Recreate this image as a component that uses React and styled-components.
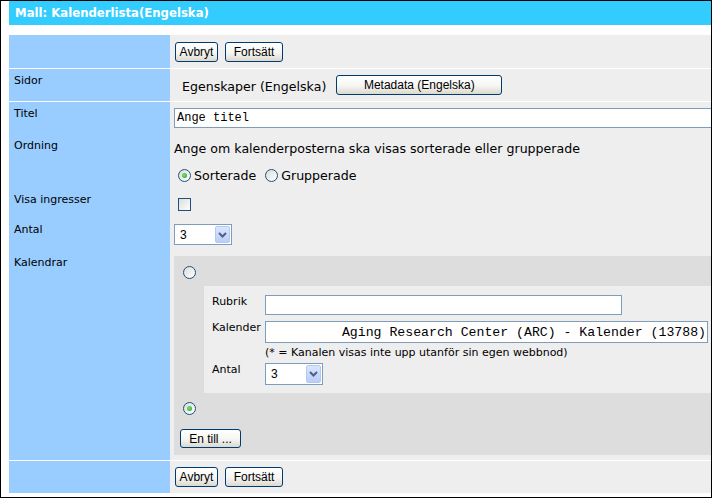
import React from "react";
import styled, { createGlobalStyle } from "styled-components";

const GlobalStyle = createGlobalStyle`
  html, body {
    margin: 0;
    padding: 0;
    background: #fff;
  }
  body {
    font-family: "DejaVu Sans", Verdana, sans-serif;
    color: #000;
  }
`;

const Frame = styled.div`
  box-sizing: border-box;
  width: 712px;
  height: 498px;
  border: 1px solid #000;
  padding: 0 0 4px 8px;
  background: #fff;
  overflow: hidden;
`;

const Header = styled.div`
  height: 24px;
  line-height: 24px;
  background: #33ccff;
  color: #fff;
  font-weight: bold;
  font-size: 11.7px;
  padding-left: 6px;
`;

const Form = styled.div`
  margin-top: 10px;
  display: flex;
  flex-direction: column;
  gap: 1px;
`;

const Section = styled.div`
  display: flex;
  flex-direction: column;
`;

const Row = styled.div`
  display: grid;
  grid-template-columns: 161px 1fr;
  height: ${(p) => p.$h}px;
`;

const Label = styled.div`
  background: #99ccff;
  font-size: 11px;
  line-height: 13px;
  padding: 5px 5px 0;
`;

const Cell = styled.div`
  box-sizing: border-box;
  background: #eeeeee;
  overflow: hidden;
  padding: ${(p) => p.$pad || "0 0 0 4px"};
`;

const Buttons = styled.div`
  display: flex;
  gap: 7px;
`;

const Button = styled.button`
  box-sizing: border-box;
  display: block;
  font: 12px "Liberation Sans", Arial, sans-serif;
  color: #000;
  height: ${(p) => p.$h || 20}px;
  width: ${(p) => p.$w}px;
  padding: 0;
  border: 1px solid #003c74;
  border-radius: 3px;
  background: linear-gradient(#ffffff, #f5f5f2 55%, #dcd8ce);
  cursor: pointer;
`;

const Inline = styled.div`
  display: flex;
  align-items: center;
  gap: 10px;
`;

const Text = styled.span`
  font-size: 12.6px;
  line-height: 16px;
  padding-top: ${(p) => p.$pt || 0}px;
`;

const TextInput = styled.input`
  box-sizing: border-box;
  display: block;
  width: ${(p) => p.$w}px;
  height: ${(p) => p.$h || 20}px;
  margin: 0;
  border: 1px solid #7f9db9;
  background: #fff;
  font-family: "Liberation Mono", "Courier New", monospace;
  font-size: ${(p) => p.$fs || 12}px;
  color: #000;
  padding: 0 ${(p) => (p.$right ? 1 : 0)}px 0 ${(p) => (p.$right ? 0 : 2)}px;
  text-align: ${(p) => (p.$right ? "right" : "left")};
  outline: none;
`;

const Paragraph = styled.div`
  font-size: 12.6px;
  line-height: 16px;
  padding-top: 1px;
`;

const RadioLine = styled.div`
  display: flex;
  align-items: center;
  height: 16px;
  margin-top: 10px;
  padding-left: 4px;
`;

const RadioLabel = styled.span`
  font-size: 12.6px;
  margin: 0 9px 0 3px;
`;

const Radio = styled.span`
  box-sizing: border-box;
  display: block;
  flex: none;
  position: relative;
  width: 13px;
  height: 13px;
  border-radius: 50%;
  border: 1px solid #1c5180;
  background: linear-gradient(135deg, #dcdcd7, #ffffff);
  &::after {
    content: "";
    display: ${(p) => (p.$checked ? "block" : "none")};
    position: absolute;
    left: 3px;
    top: 3px;
    width: 5px;
    height: 5px;
    border-radius: 50%;
    background: radial-gradient(circle at 40% 40%, #7be07b, #21a121);
  }
`;

const Checkbox = styled.span`
  box-sizing: border-box;
  display: block;
  width: 13px;
  height: 13px;
  border: 1px solid #1c5180;
  background: linear-gradient(135deg, #dcdcd7, #ffffff);
`;

const SelectBox = styled.div`
  box-sizing: border-box;
  display: flex;
  align-items: center;
  width: 58px;
  height: ${(p) => p.$h}px;
  border: 1px solid #7f9db9;
  background: #fff;
  font: 12px "Liberation Sans", Arial, sans-serif;
  padding: 1px 1px 1px 5px;
`;

const SelectArrow = styled.span`
  box-sizing: border-box;
  margin-left: auto;
  width: 15px;
  height: 100%;
  border: 1px solid #b4c8f4;
  border-radius: 2px;
  background: linear-gradient(#dbe6fe, #b9cdf8);
  display: flex;
  align-items: center;
  justify-content: center;
`;

const Select = ({ h, value }) => (
  <SelectBox $h={h}>
    <span>{value}</span>
    <SelectArrow>
      <svg width="9" height="6" viewBox="0 0 9 6">
        <polyline points="1,1 4.5,4.5 8,1" fill="none" stroke="#4d6185" strokeWidth="2" />
      </svg>
    </SelectArrow>
  </SelectBox>
);

const CalendarBox = styled.div`
  box-sizing: border-box;
  display: flex;
  flex-direction: column;
  align-items: flex-start;
  background: #dddddd;
  height: 199px;
  padding: 10px 0 0 9px;
`;

const InnerBox = styled.div`
  box-sizing: border-box;
  align-self: stretch;
  margin: 7px 0 9px 21px;
  height: 107px;
  background: #eeeeee;
  padding: 9px 0 0 8px;
  display: flex;
  flex-direction: column;
  overflow: hidden;
`;

const InnerRow = styled.div`
  display: grid;
  grid-template-columns: 53px 1fr;
  margin-top: ${(p) => p.$mt || 0}px;
`;

const InnerLabel = styled.div`
  font-size: 11px;
  line-height: 13px;
`;

const Note = styled.div`
  font-size: 11px;
  line-height: 14px;
  white-space: nowrap;
`;

const AddButton = styled(Button)`
  margin: 14px 0 0 -3px;
`;

export default function App() {
  return (
    <>
      <GlobalStyle />
      <Frame>
        <Header>Mall: Kalenderlista(Engelska)</Header>
        <Form>
          <Row $h={33}>
            <Label />
            <Cell $pad="7px 5px">
              <Buttons>
                <Button $w={43}>Avbryt</Button>
                <Button $w={58}>Fortsätt</Button>
              </Buttons>
            </Cell>
          </Row>
          <Row $h={32}>
            <Label>Sidor</Label>
            <Cell $pad="6px 0 0 12px">
              <Inline>
                <Text $pt={3}>Egenskaper (Engelska)</Text>
                <Button $w={166}>Metadata (Engelska)</Button>
              </Inline>
            </Cell>
          </Row>
          <Section>
            <Row $h={32}>
              <Label>Titel</Label>
              <Cell $pad="6px 0 0 4px">
                <TextInput $w={580} defaultValue="Ange titel" />
              </Cell>
            </Row>
            <Row $h={54}>
              <Label>Ordning</Label>
              <Cell $pad="6px 0 0 4px">
                <Paragraph>Ange om kalenderposterna ska visas sorterade eller grupperade</Paragraph>
                <RadioLine>
                  <Radio $checked />
                  <RadioLabel>Sorterade</RadioLabel>
                  <Radio />
                  <RadioLabel>Grupperade</RadioLabel>
                </RadioLine>
              </Cell>
            </Row>
            <Row $h={30}>
              <Label>Visa ingresser</Label>
              <Cell $pad="10px 0 0 8px">
                <Checkbox />
              </Cell>
            </Row>
            <Row $h={33}>
              <Label>Antal</Label>
              <Cell $pad="6px 0 0 4px">
                <Select h={21} value="3" />
              </Cell>
            </Row>
            <Row $h={209}>
              <Label>Kalendrar</Label>
              <Cell $pad="5px 0 0 4px">
                <CalendarBox>
                  <Radio />
                  <InnerBox>
                    <InnerRow>
                      <InnerLabel>Rubrik</InnerLabel>
                      <TextInput $w={357} />
                    </InnerRow>
                    <InnerRow $mt={6}>
                      <InnerLabel>Kalender</InnerLabel>
                      <TextInput
                        $w={443}
                        $h={22}
                        $fs={13.2}
                        $right
                        defaultValue="Aging Research Center (ARC) - Kalender (13788)"
                      />
                    </InnerRow>
                    <InnerRow $mt={3}>
                      <span />
                      <Note>(* = Kanalen visas inte upp utanför sin egen webbnod)</Note>
                    </InnerRow>
                    <InnerRow $mt={3}>
                      <InnerLabel>Antal</InnerLabel>
                      <Select h={22} value="3" />
                    </InnerRow>
                  </InnerBox>
                  <Radio $checked />
                  <AddButton $w={61} $h={19}>En till ...</AddButton>
                </CalendarBox>
              </Cell>
            </Row>
          </Section>
          <Row $h={32}>
            <Label />
            <Cell $pad="6px 5px">
              <Buttons>
                <Button $w={43}>Avbryt</Button>
                <Button $w={58}>Fortsätt</Button>
              </Buttons>
            </Cell>
          </Row>
        </Form>
      </Frame>
    </>
  );
}
